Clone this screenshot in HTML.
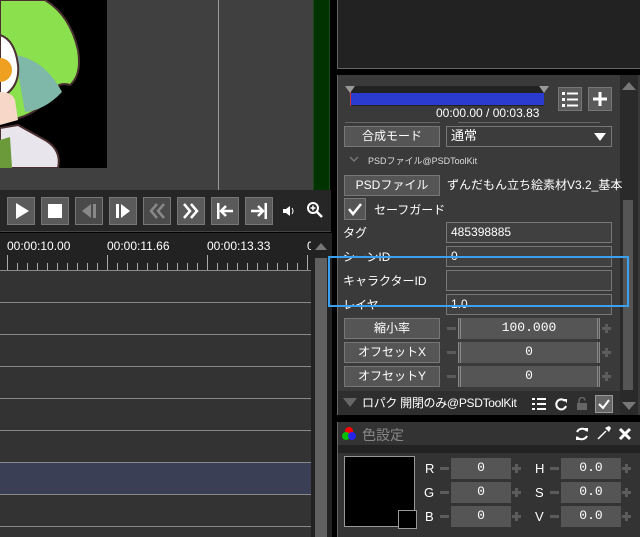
<!DOCTYPE html><html><head><meta charset="utf-8"><style>
*{margin:0;padding:0;box-sizing:border-box}
body{width:640px;height:537px;background:#000;position:relative;overflow:hidden;font-family:"Liberation Sans","Noto Sans CJK JP",sans-serif;color:#eee}
.a{position:absolute}
.btn{position:absolute;width:28px;height:28px;background:#5a5a5a;border:1px solid #777}
.pb{position:absolute;background:#555;border:1px solid #777;color:#fff;font-size:12px;text-align:center;line-height:19px}
.in{position:absolute;background:#404040;border:1px solid #777;color:#fff;font-size:12px;padding-left:4px;line-height:18px}
.lbl{position:absolute;font-size:12px;color:#fff;line-height:14px}
.num{position:absolute;background:#555;color:#fff;font-family:"Liberation Mono",monospace;font-size:13px;text-align:center;line-height:20px}
.pm{position:absolute;width:10px;height:21px}
.pm::before{content:"";position:absolute;left:0;top:9px;width:9px;height:3px;background:#5c5c5c}
.pp::after{content:"";position:absolute;left:3px;top:6px;width:3px;height:9px;background:#5c5c5c}
.row{position:absolute;left:0;width:311px;height:1px;background:#888}
</style></head><body>
<div class="a" style="left:0;top:0;width:313px;height:190px;background:#404040"></div>
<div class="a" style="left:0;top:0;width:107px;height:168px;background:#000;overflow:hidden">
<svg width="107" height="168"><path d="M0 0 L45 0 Q70 15 78 50 Q82 75 70 85 Q55 80 48 100 Q30 118 8 120 L0 120Z" fill="#8be04e" stroke="#4a3030" stroke-width="2"/><path d="M15 55 Q45 60 62 92 Q45 110 25 112Z" fill="#7fb8a8"/><path d="M0 35 Q15 40 18 65 Q20 85 5 95 L0 95Z" fill="#fff" stroke="#4a3030" stroke-width="2"/><circle cx="0" cy="70" r="12" fill="#f0a020"/><path d="M0 92 Q12 92 15 100 L18 120 L0 125Z" fill="#f7d8c8"/><path d="M0 128 L18 125 L45 140 Q62 150 58 168 L0 168Z" fill="#e8e6ec" stroke="#4a3030" stroke-width="2"/><path d="M0 140 L10 137 L12 168 L0 168Z" fill="#6a9a3a"/></svg></div>
<div class="a" style="left:218px;top:0;width:1px;height:190px;background:#999"></div>
<div class="a" style="left:313px;top:0;width:17px;height:190px;background:#003300;border-left:1px solid #1a4a1a;border-right:1px solid #1a4a1a"></div>
<div class="a" style="left:0;top:190px;width:331px;height:42px;background:#262626;border-bottom:1px solid #444"></div>
<div class="btn" style="left:7px;top:197px"><svg width="26" height="26"><path d="M8 5 L21 13 L8 21Z" fill="#fff"/></svg></div>
<div class="btn" style="left:41px;top:197px"><svg width="26" height="26"><rect x="6" y="6" width="14" height="14" fill="#fff"/></svg></div>
<div class="btn" style="left:75px;top:197px;background:#4a4a4a"><svg width="26" height="26"><path d="M15 6 L6 13 L15 20Z" fill="#888"/><rect x="17" y="6" width="3" height="14" fill="#888"/></svg></div>
<div class="btn" style="left:109px;top:197px"><svg width="26" height="26"><rect x="6" y="6" width="3" height="14" fill="#fff"/><path d="M11 6 L20 13 L11 20Z" fill="#fff"/></svg></div>
<div class="btn" style="left:143px;top:197px;background:#4a4a4a"><svg width="26" height="26"><path d="M13 6 L7 13 L13 20 M20 6 L14 13 L20 20" stroke="#888" stroke-width="2.5" fill="none"/></svg></div>
<div class="btn" style="left:177px;top:197px"><svg width="26" height="26"><path d="M6 6 L12 13 L6 20 M13 6 L19 13 L13 20" stroke="#fff" stroke-width="2.5" fill="none"/></svg></div>
<div class="btn" style="left:211px;top:197px"><svg width="26" height="26"><rect x="5" y="5" width="2.5" height="16" fill="#fff"/><path d="M9 13 H21 M14 8 L9 13 L14 18" stroke="#fff" stroke-width="2.5" fill="none"/></svg></div>
<div class="btn" style="left:245px;top:197px"><svg width="26" height="26"><rect x="18.5" y="5" width="2.5" height="16" fill="#fff"/><path d="M5 13 H17 M12 8 L17 13 L12 18" stroke="#fff" stroke-width="2.5" fill="none"/></svg></div>
<svg class="a" style="left:281px;top:203px" width="16" height="16"><path d="M2 6 H5 L9 3 V13 L5 10 H2Z" fill="#fff"/><path d="M11 5 Q13 8 11 11" stroke="#fff" fill="none"/></svg>
<svg class="a" style="left:306px;top:201px" width="18" height="18"><circle cx="7" cy="7" r="5" stroke="#fff" stroke-width="2" fill="none"/><path d="M11 11 L16 16" stroke="#fff" stroke-width="2.5"/><path d="M4.5 7 H9.5 M7 4.5 V9.5" stroke="#fff" stroke-width="1.5"/></svg>
<div class="a" style="left:0;top:233px;width:311px;height:37px;background:#222"></div>
<div class="a" style="left:7px;top:239px;font-size:12px;color:#fff">00:00:10.00</div>
<div class="a" style="left:107px;top:239px;font-size:12px;color:#fff">00:00:11.66</div>
<div class="a" style="left:207px;top:239px;font-size:12px;color:#fff">00:00:13.33</div>
<div class="a" style="left:307px;top:239px;font-size:12px;color:#fff">0</div>
<svg class="a" style="left:0;top:253px" width="311" height="18"><g stroke="#aaa"><path d="M7.5 2V17M107.5 2V17M207.5 2V17M307.5 2V17"/><path d="M17.5 10V17M27.5 10V17M37.5 10V17M47.5 10V17M57.5 10V17M67.5 10V17M77.5 10V17M87.5 10V17M97.5 10V17M117.5 10V17M127.5 10V17M137.5 10V17M147.5 10V17M157.5 10V17M167.5 10V17M177.5 10V17M187.5 10V17M197.5 10V17M217.5 10V17M227.5 10V17M237.5 10V17M247.5 10V17M257.5 10V17M267.5 10V17M277.5 10V17M287.5 10V17M297.5 10V17"/></g></svg>
<div class="a" style="left:0;top:270px;width:311px;height:267px;background:#333"></div>
<div class="a" style="left:0;top:462px;width:311px;height:32px;background:#3b3f55"></div>
<div class="row" style="top:270px"></div><div class="row" style="top:302px"></div><div class="row" style="top:334px"></div><div class="row" style="top:366px"></div><div class="row" style="top:398px"></div><div class="row" style="top:430px"></div><div class="row" style="top:462px"></div><div class="row" style="top:494px"></div><div class="row" style="top:526px"></div>
<div class="a" style="left:311px;top:233px;width:21px;height:304px;background:#222"></div>
<div class="a" style="left:315px;top:258px;width:12px;height:279px;background:#606060"></div>
<svg class="a" style="left:314px;top:242px" width="14" height="10"><path d="M1 8 L7 1 L13 8Z" fill="#777"/></svg>
<div class="a" style="left:337px;top:0;width:303px;height:69px;background:#222;border-left:1px solid #666;border-bottom:1px solid #666"></div>
<div class="a" style="left:337px;top:75px;width:303px;height:340px;background:#3a3a3a;border-left:1px solid #666"></div>
<div class="a" style="left:620px;top:75px;width:18px;height:340px;background:#2a2a2a"></div>
<div class="a" style="left:623px;top:200px;width:10px;height:190px;background:#555"></div>
<svg class="a" style="left:621px;top:80px" width="16" height="12"><path d="M1 10 L8 2 L15 10Z" fill="#777"/></svg>
<svg class="a" style="left:621px;top:400px" width="16" height="12"><path d="M1 2 L8 10 L15 2Z" fill="#777"/></svg>
<div class="a" style="left:350px;top:86px;width:194px;height:20px;background:#222"></div>
<div class="a" style="left:351px;top:93px;width:193px;height:12px;background:#2b3bd0"></div>
<div class="a" style="left:350px;top:88px;width:1px;height:18px;background:#c33"></div>
<svg class="a" style="left:344px;top:86px" width="206" height="8"><path d="M1 0 L11 0 L6 7Z M195 0 L205 0 L200 7Z" fill="#999"/></svg>
<div class="a" style="left:436px;top:106px;font-size:12px;color:#fff">00:00.00 / 00:03.83</div>
<div class="btn" style="left:558px;top:87px;width:24px;height:24px"><svg width="22" height="22"><g fill="#fff"><rect x="3" y="4" width="3" height="3"/><rect x="3" y="10" width="3" height="3"/><rect x="3" y="16" width="3" height="3"/><rect x="8" y="4.5" width="11" height="2"/><rect x="8" y="10.5" width="11" height="2"/><rect x="8" y="16.5" width="11" height="2"/></g></svg></div>
<div class="btn" style="left:588px;top:87px;width:24px;height:24px"><svg width="22" height="22"><path d="M11 4V18M4 11H18" stroke="#fff" stroke-width="3"/></svg></div>
<div class="a" style="left:345px;top:122px;width:95px;height:1px;background:#666"></div>
<div class="a" style="left:458px;top:122px;width:142px;height:1px;background:#666"></div>
<div class="pb" style="left:344px;top:126px;width:96px;height:21px">合成モード</div>
<div class="in" style="left:446px;top:126px;width:166px;height:21px;background:#3c3c3c;font-size:13px">通常<svg style="position:absolute;right:5px;top:6px" width="12" height="8"><path d="M0 0H12L6 8Z" fill="#fff"/></svg></div>
<svg class="a" style="left:349px;top:156px" width="10" height="7"><path d="M1 1L5 5L9 1" stroke="#777" stroke-width="1.5" fill="none"/></svg>
<div class="a" style="left:368px;top:154px;font-size:9px;color:#ddd">PSDファイル@PSDToolKit</div>
<div class="pb" style="left:344px;top:175px;width:96px;height:21px">PSDファイル</div>
<div class="lbl" style="left:447px;top:178px">ずんだもん立ち絵素材V3.2_基本</div>
<div class="a" style="left:344px;top:198px;width:22px;height:22px;background:#555;border:1px solid #777"><svg width="20" height="20"><path d="M4 10 L8 15 L16 5" stroke="#fff" stroke-width="2.5" fill="none"/></svg></div>
<div class="lbl" style="left:374px;top:203px">セーフガード</div>
<div class="lbl" style="left:343px;top:226px">タグ</div>
<div class="in" style="left:446px;top:222px;width:166px;height:21px">485398885</div>
<div class="lbl" style="left:343px;top:250px">シーンID</div>
<div class="in" style="left:446px;top:246px;width:166px;height:21px">0</div>
<div class="lbl" style="left:343px;top:274px">キャラクターID</div>
<div class="in" style="left:446px;top:270px;width:166px;height:21px"></div>
<div class="lbl" style="left:343px;top:298px">レイヤ</div>
<div class="in" style="left:446px;top:294px;width:166px;height:21px">1.0</div>
<div class="a" style="left:328px;top:256px;width:301px;height:51px;border:2px solid #3ba0f0"></div>
<div class="pb" style="left:344px;top:318px;width:96px;height:21px">縮小率</div>
<div class="pm" style="left:447px;top:318px"></div><div class="num" style="left:458px;top:318px;width:142px;height:21px;border-left:3px double #888;border-right:3px double #888">100.000</div><div class="pm pp" style="left:602px;top:318px"></div>
<div class="pb" style="left:344px;top:342px;width:96px;height:21px">オフセットX</div>
<div class="pm" style="left:447px;top:342px"></div><div class="num" style="left:458px;top:342px;width:142px;height:21px;border-left:3px double #888;border-right:3px double #888">0</div><div class="pm pp" style="left:602px;top:342px"></div>
<div class="pb" style="left:344px;top:366px;width:96px;height:21px">オフセットY</div>
<div class="pm" style="left:447px;top:366px"></div><div class="num" style="left:458px;top:366px;width:142px;height:21px;border-left:3px double #888;border-right:3px double #888">0</div><div class="pm pp" style="left:602px;top:366px"></div>
<div class="a" style="left:338px;top:391px;width:282px;height:24px;background:#2e2e2e"></div>
<svg class="a" style="left:343px;top:398px" width="14" height="10"><path d="M0 0H14L7 9Z" fill="#666"/></svg>
<div class="lbl" style="left:362px;top:396px;letter-spacing:-0.3px">ロパク 開閉のみ@PSDToolKit</div>
<svg class="a" style="left:532px;top:397px" width="14" height="14"><g fill="#fff"><rect x="0" y="1" width="3" height="2"/><rect x="0" y="6" width="3" height="2"/><rect x="0" y="11" width="3" height="2"/><rect x="5" y="1" width="9" height="2"/><rect x="5" y="6" width="9" height="2"/><rect x="5" y="11" width="9" height="2"/></g></svg>
<svg class="a" style="left:554px;top:397px" width="14" height="14"><path d="M11 4 A5 5 0 1 0 12 9" stroke="#fff" stroke-width="2" fill="none"/><path d="M9 2 L13 2 L13 6Z" fill="#fff"/></svg>
<svg class="a" style="left:576px;top:397px" width="12" height="14"><rect x="1" y="6" width="10" height="7" fill="#666"/><path d="M3 6V3.5A3 3 0 0 1 9 3.5" stroke="#666" stroke-width="1.5" fill="none"/></svg>
<div class="a" style="left:595px;top:395px;width:18px;height:18px;background:#666;border:1px solid #999"><svg width="16" height="16"><path d="M3 8 L7 12 L13 4" stroke="#fff" stroke-width="2" fill="none"/></svg></div>
<div class="a" style="left:337px;top:422px;width:303px;height:115px;background:#333;border-left:1px solid #666"></div>
<div class="a" style="left:338px;top:445px;width:302px;height:8px;background:#222"></div>
<svg class="a" style="left:341px;top:426px" width="16" height="16"><circle cx="8" cy="5" r="4" fill="#f00"/><circle cx="5" cy="10" r="4" fill="#0c0" opacity=".9"/><circle cx="11" cy="10" r="4" fill="#22f" opacity=".9"/></svg>
<div class="a" style="left:362px;top:425px;font-size:14px;color:#888">色設定</div>
<svg class="a" style="left:574px;top:426px" width="16" height="16"><path d="M13 5 A6 6 0 0 0 3 6 M3 11 A6 6 0 0 0 13 10" stroke="#fff" stroke-width="2" fill="none"/><path d="M10 2L14 2L14 6Z M6 14L2 14L2 10Z" fill="#fff"/></svg>
<svg class="a" style="left:596px;top:425px" width="16" height="16"><path d="M2 14 L10 6" stroke="#fff" stroke-width="1.5"/><path d="M9 3 L13 7 L15 3 L13 1Z" fill="#fff"/></svg>
<svg class="a" style="left:618px;top:427px" width="14" height="14"><path d="M2 2L12 12M12 2L2 12" stroke="#fff" stroke-width="3"/></svg>
<div class="a" style="left:344px;top:456px;width:71px;height:71px;background:#000;border:1px solid #999"></div>
<div class="a" style="left:398px;top:510px;width:19px;height:19px;background:#000;border:1px solid #999"></div>
<div class="lbl" style="left:425px;top:462px;font-size:13px">R</div><div class="lbl" style="left:424px;top:486px;font-size:13px">G</div><div class="lbl" style="left:425px;top:510px;font-size:13px">B</div>
<div class="lbl" style="left:535px;top:462px;font-size:13px">H</div><div class="lbl" style="left:535px;top:486px;font-size:13px">S</div><div class="lbl" style="left:535px;top:510px;font-size:13px">V</div>
<div class="pm" style="left:440px;top:458px"></div><div class="num" style="left:451px;top:458px;width:60px;height:21px">0</div><div class="pm pp" style="left:512px;top:458px"></div>
<div class="pm" style="left:440px;top:482px"></div><div class="num" style="left:451px;top:482px;width:60px;height:21px">0</div><div class="pm pp" style="left:512px;top:482px"></div>
<div class="pm" style="left:440px;top:506px"></div><div class="num" style="left:451px;top:506px;width:60px;height:21px">0</div><div class="pm pp" style="left:512px;top:506px"></div>
<div class="pm" style="left:550px;top:458px"></div><div class="num" style="left:561px;top:458px;width:60px;height:21px">0.0</div><div class="pm pp" style="left:622px;top:458px"></div>
<div class="pm" style="left:550px;top:482px"></div><div class="num" style="left:561px;top:482px;width:60px;height:21px">0.0</div><div class="pm pp" style="left:622px;top:482px"></div>
<div class="pm" style="left:550px;top:506px"></div><div class="num" style="left:561px;top:506px;width:60px;height:21px">0.0</div><div class="pm pp" style="left:622px;top:506px"></div>
</body></html>
